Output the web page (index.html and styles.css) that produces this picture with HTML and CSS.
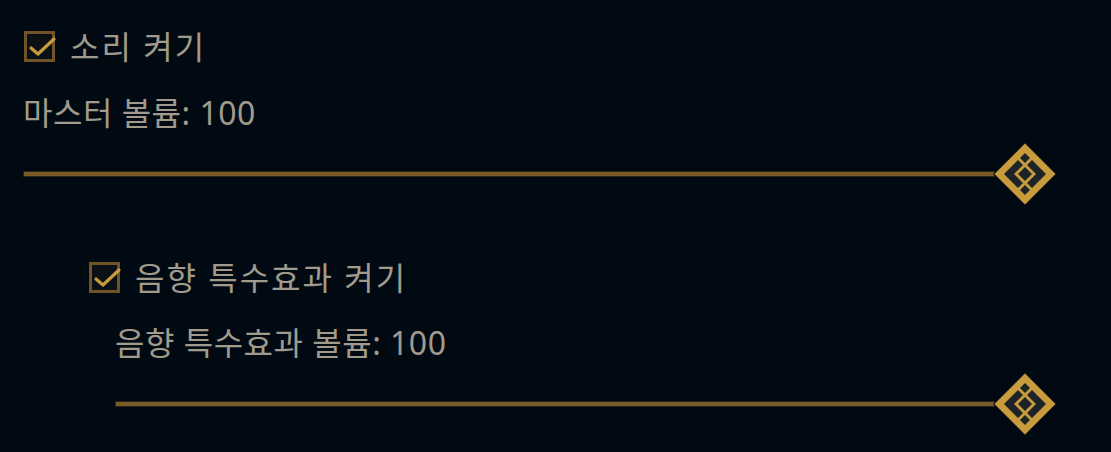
FILE: index.html
```html
<!DOCTYPE html>
<html lang="ko">
<head>
    <meta charset="UTF-8">
    <meta name="viewport" content="width=device-width, initial-scale=1.0">
    <title>Sound</title>
    <link rel="stylesheet" href="styles.css">
</head>
<body>
    <div class="settings">
        <label class="toggle">
            <span class="box">
                <svg class="check" viewBox="0 0 25 25" width="25" height="25"><path d="M4 14 L11 20 L27 5" fill="none" stroke="#c89b3c" stroke-width="3.2" stroke-linecap="round" stroke-linejoin="round"/></svg>
            </span>
            <span class="toggle-text">소리 켜기</span>
        </label>
        <div class="label">마스터 볼륨: 100</div>
        <div class="slider">
            <div class="track"></div>
            <svg class="thumb" viewBox="0 0 64 64" width="64" height="64">
                <polygon points="32,0 64,32 32,64 0,32" fill="#0a0e13"/>
                <polygon points="32,1.5 62.5,32 32,62.5 1.5,32" fill="#c89b3c"/>
                <polygon points="11,32 25,18 30,23 21,32 30,41 25,46" fill="#1e2328"/>
                <polygon points="53,32 39,18 34,23 43,32 34,41 39,46" fill="#1e2328"/>
                <polygon points="32,11 37,16 32,21 27,16" fill="#1e2328"/>
                <polygon points="32,43 37,48 32,53 27,48" fill="#1e2328"/>
                <polygon points="32,25 39,32 32,39 25,32" fill="#1e2328"/>
            </svg>
        </div>

        <div class="sub">
            <label class="toggle">
                <span class="box">
                    <svg class="check" viewBox="0 0 25 25" width="25" height="25"><path d="M4 14 L11 20 L27 5" fill="none" stroke="#c89b3c" stroke-width="3.2" stroke-linecap="round" stroke-linejoin="round"/></svg>
                </span>
                <span class="toggle-text">음향 특수효과 켜기</span>
            </label>
            <div class="sub-body">
                <div class="label">음향 특수효과 볼륨: 100</div>
                <div class="slider">
                    <div class="track"></div>
                    <svg class="thumb" viewBox="0 0 64 64" width="64" height="64">
                        <polygon points="32,0 64,32 32,64 0,32" fill="#0a0e13"/>
                        <polygon points="32,1.5 62.5,32 32,62.5 1.5,32" fill="#c89b3c"/>
                        <polygon points="11,32 25,18 30,23 21,32 30,41 25,46" fill="#1e2328"/>
                        <polygon points="53,32 39,18 34,23 43,32 34,41 39,46" fill="#1e2328"/>
                        <polygon points="32,11 37,16 32,21 27,16" fill="#1e2328"/>
                        <polygon points="32,43 37,48 32,53 27,48" fill="#1e2328"/>
                        <polygon points="32,25 39,32 32,39 25,32" fill="#1e2328"/>
                    </svg>
                </div>
            </div>
        </div>
    </div>
</body>
</html>
```

FILE: styles.css
```css
* {
    margin: 0;
    padding: 0;
    box-sizing: border-box;
}

body {
    background-color: #010a13;
    color: #a09b8c;
    font-family: "Noto Sans", "Noto Sans CJK KR", sans-serif;
    width: 1111px;
    height: 452px;
    overflow: hidden;
}

.settings {
    padding: 31px 54px 0 23px;
    display: flex;
    flex-direction: column;
}

.toggle {
    display: flex;
    align-items: center;
    gap: 15px;
    height: 31px;
    margin-left: 1px;
}

.box {
    width: 31px;
    height: 31px;
    border: 3px solid #6e5426;
    background: #0a1016;
    flex-shrink: 0;
}

.check {
    display: block;
    overflow: visible;
}

.toggle-text {
    font-size: 32px;
    line-height: 31px;
    letter-spacing: 2px;
}

.label {
    margin-top: 31px;
    font-size: 32px;
    line-height: 40px;
    letter-spacing: 0.5px;
}

.slider {
    margin-top: 9px;
    height: 64px;
    display: flex;
    align-items: center;
}

.track {
    flex: 1;
    height: 6px;
    background: #7a5c29;
    border: 1px solid #2a2418;
    margin-right: -2px;
}

.thumb {
    display: block;
    flex-shrink: 0;
}

.sub {
    margin-top: 56px;
    margin-left: 65px;
}

.sub-body {
    margin-left: 27px;
}

.sub .label {
    margin-top: 30px;
}
```
